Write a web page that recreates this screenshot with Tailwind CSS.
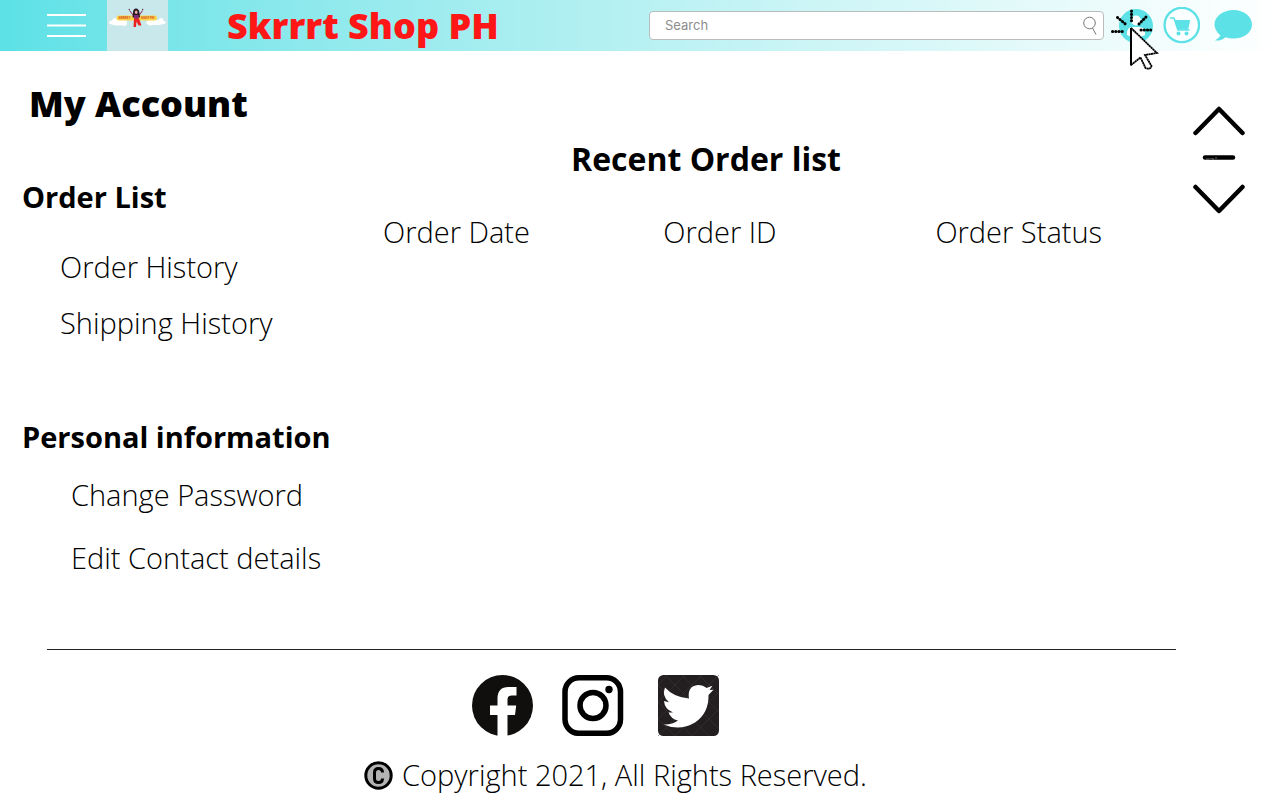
<!DOCTYPE html>
<html lang="en">
<head>
<meta charset="utf-8">
<meta name="viewport" content="width=device-width, initial-scale=1">
<title>Skrrrt Shop PH - My Account</title>
<script src="https://cdn.jsdelivr.net/npm/@tailwindcss/browser@4"></script>
</head>
<body class="bg-white font-['Open_Sans',sans-serif] text-black">
<header class="flex h-[51px] items-center bg-linear-to-r from-[#5ce1e6] to-white">
  <button type="button" aria-label="Menu" class="ml-[47px] shrink-0">
    <svg class="block" width="40" height="24" viewBox="0 0 40 24" stroke="#fff" stroke-width="2"><path d="M0 1h39M0 11.500h39M0 22h39"/></svg>
  </button>
  <a href="#" aria-label="Home" class="ml-5 shrink-0">
    <svg class="block" width="61" height="51" viewBox="0 0 61 51">
      <rect width="61" height="51" fill="#c8e8ec"/>
      <g fill="#fff"><ellipse cx="11" cy="22.500" rx="9" ry="3"/><circle cx="8" cy="20.500" r="2.500"/><ellipse cx="49" cy="22.500" rx="10" ry="2.500"/><circle cx="54" cy="20.500" r="2.500"/><circle cx="17" cy="23" r="3"/><circle cx="43" cy="22.500" r="3"/></g>
      <rect x="9.500" y="15.500" width="40.500" height="5" rx="2.500" fill="#fbd44c"/>
      <text x="11.500" y="19.200" font-size="3" font-weight="800" fill="#d9632a">SKRRRT</text>
      <text x="34" y="19.200" font-size="3" font-weight="800" fill="#d9632a">SHOP PH</text>
      <path d="M26.500 15.500l-4-5M32 15.500l3.500-5" stroke="#a04a78" stroke-width="1.200"/>
      <circle cx="22.300" cy="9.500" r=".8" fill="#6e4a58"/><circle cx="35.700" cy="9.500" r=".8" fill="#6e4a58"/>
      <path d="M26 13q0-4.500 3-4.500t3.500 4.500l.5 4.500h-7.500z" fill="#2c1824"/>
      <ellipse cx="29.200" cy="12.300" rx="1.300" ry="1.700" fill="#e9b3a0"/>
      <path d="M27 15h4.500v4H27z" fill="#7c2f7c"/>
      <path d="M27 18.500h5l2.500 7h-3l-2-4-.5 5.500h-2.500z" fill="#ec2323"/>
    </svg>
  </a>
  <p class="ml-[59px] shrink-0 text-4xl leading-[51px] font-extrabold whitespace-nowrap text-[#ff1616]">Skrrrt Shop PH</p>
  <form role="search" class="ml-auto flex h-[29px] w-[455px] items-center rounded-sm border border-[#b9bcbd] bg-white">
    <input type="search" aria-label="Search" placeholder="Search" class="min-w-0 flex-1 bg-transparent pl-[15px] font-['Inter',sans-serif] text-[13px] outline-none placeholder:text-[#8c8c8c]">
    <button type="submit" aria-label="Submit search" class="mr-[5px]">
      <svg class="block" width="15" height="20" viewBox="0 0 15 20" fill="none" stroke="#777" stroke-width="1"><circle cx="6.500" cy="7" r="5.800"/><path d="M9.500 12l3.500 6.500"/></svg>
    </button>
  </form>
  <div class="relative ml-[15px] shrink-0">
    <button type="button" aria-label="Account" class="block">
      <svg class="block" width="34" height="34" viewBox="0 0 34 34"><circle cx="17" cy="17" r="17" fill="#5ce1e6"/><circle cx="17" cy="11.500" r="5" fill="#fff"/><path d="M8 26v-2q0-6 6-6h6q6 0 6 6v2q-9 5-18 0z" fill="#fff"/></svg>
    </button>
    <svg class="pointer-events-none absolute -top-[1px] -left-[9px]" width="50" height="64" viewBox="1110 8 50 64" aria-hidden="true">
      <path d="M1131 28v37l9-7.500 5.500 11q4 3 5-2l-6-11 12.500-2.500z" fill="#fff"/>
      <path d="M1131.500 11v11M1117.500 17.500l8.500 7M1139 24l8-8M1112.500 31.500h11M1141 30h12" fill="none" stroke="#000" stroke-width="3" stroke-linecap="round" stroke-dasharray="0.200 3"/>
      <path d="M1131 28v37.500" stroke="#000" stroke-width="2" fill="none"/>
      <path d="M1131 28l26 25-12 2 6.500 11q-1 4-6 2l-5-10.500-9.500 7.500" fill="none" stroke="#000" stroke-width="1.800" stroke-dasharray="2.200 .3"/>
    </svg>
  </div>
  <a href="#" aria-label="Cart" class="ml-[10px] shrink-0">
    <svg class="block" width="37" height="37" viewBox="0 0 37 37"><circle cx="18.800" cy="18" r="17.200" fill="#fff" fill-opacity=".7" stroke="#5ce1e6" stroke-width="2.300"/><path d="M7.500 11h3.500l4 12h11" fill="none" stroke="#5ce1e6" stroke-width="1.600" stroke-linecap="round"/><path d="M11.500 13h15.700l-2 9.500H14.500z" fill="#5ce1e6"/><circle cx="15.500" cy="26.500" r="2" fill="#5ce1e6"/><circle cx="23.500" cy="26.500" r="2" fill="#5ce1e6"/></svg>
  </a>
  <a href="#" aria-label="Messages" class="mr-7 ml-[14px] shrink-0">
    <svg class="block" width="38" height="32" viewBox="0 0 38 32"><path d="M19.500 0C30 0 38 6.500 38 14.500S30 28.500 19.500 28.500q-4.500 0-8-1.300Q7.500 31 1 30.500 5 28 6.500 25.500.5 20.500.5 14.500C.5 6.500 9 0 19.500 0z" fill="#5ce1e6"/></svg>
  </a>
</header>

<main class="flex items-start pt-[33px] pr-[35px] pl-[22px]">
  <nav aria-label="Account" class="w-[361px] shrink-0 text-[29px] leading-10 font-light">
    <h1 class="ml-[7px] text-4xl leading-10 font-extrabold">My Account</h1>
    <h2 class="mt-[53px] font-bold">Order List</h2>
    <ul class="mt-[30px] ml-[38px] space-y-4">
      <li><a href="#">Order History</a></li>
      <li><a href="#">Shipping History</a></li>
    </ul>
    <h2 class="mt-[74px] font-bold">Personal information</h2>
    <ul class="mt-[18px] ml-[49px] space-y-[23px]">
      <li><a href="#">Change Password</a></li>
      <li><a href="#">Edit Contact details</a></li>
    </ul>
  </nav>
  <section class="mt-[55px] min-w-0 flex-1" aria-labelledby="recent">
    <h2 id="recent" class="pl-[188px] text-[32px] leading-10 font-bold">Recent Order list</h2>
    <table class="mt-[33px] w-full table-fixed text-left text-[29px] leading-10">
      <thead><tr>
        <th scope="col" class="w-[34.6%] font-light">Order Date</th>
        <th scope="col" class="w-[33.6%] font-light">Order ID</th>
        <th scope="col" class="font-light">Order Status</th>
      </tr></thead>
      <tbody></tbody>
    </table>
  </section>
  <div class="mt-[22px] flex w-[52px] shrink-0 flex-col items-center">
    <button type="button" aria-label="Scroll up"><svg class="block" width="52" height="30" viewBox="0 0 52 30" fill="none" stroke="#000" stroke-width="4.500" stroke-linecap="round" stroke-linejoin="round"><path d="M2.500 27L26 3l23.500 24"/></svg></button>
    <svg class="mt-4 mb-5 block" width="34" height="12" viewBox="0 0 34 12" aria-hidden="true"><path d="M3 5.500h28" stroke="#000" stroke-width="4.500" stroke-linecap="round"/><path d="M4 7h3m1-1v1m2-1v1h2m1-1h2" stroke="#999" stroke-width=".7"/></svg>
    <button type="button" aria-label="Scroll down"><svg class="block" width="52" height="30" viewBox="0 0 52 30" fill="none" stroke="#000" stroke-width="4.500" stroke-linecap="round" stroke-linejoin="round"><path d="M2.500 3L26 27 49.500 3"/></svg></button>
  </div>
</main>

<footer class="mt-[71px] mr-[104px] ml-[47px] border-t border-[#222] pt-[25px]">
  <div class="flex justify-center pr-8">
    <a href="#" aria-label="Facebook"><svg class="block" width="61" height="61" viewBox="0 0 61 61"><circle cx="30.500" cy="30.500" r="30.500" fill="#100f0d"/><path d="M25.500 61V40H18v-9.500h7.500v-7q0-11.500 11-11.500h8v8.500h-5q-4 0-4 4v6h8.700L43 40h-7.500v21z" fill="#fff"/></svg></a>
    <a href="#" aria-label="Instagram" class="ml-[29px]"><svg class="block" width="62" height="61" viewBox="0 0 62 61" fill="none" stroke="#000" stroke-width="5.500"><rect x="3" y="2.800" width="55.500" height="55.500" rx="14"/><circle cx="31" cy="30.500" r="13"/><circle cx="47" cy="14.500" r="3.700" fill="#000" stroke="none"/></svg></a>
    <a href="#" aria-label="Twitter" class="ml-[34px]"><svg class="block" width="61" height="61" viewBox="0 0 61 61"><rect width="61" height="61" rx="5.500" fill="#231f20"/><path d="M0 10L51 61M0 27l34 34M0 44l17 17M7 0l54 54M24 0l37 37M41 0l20 20M10 0L0 10M27 0L0 27M44 0L0 44M61 0L0 61M61 17L17 61M61 34L34 61" stroke="#3c3a3c" stroke-width=".5"/><path d="M5.500 49.500Q14 50 20 45.500q-7-1.500-9.500-8h4.500q-8.500-3.500-9-11.500l5 1.200Q3.500 21 7 12.500 16 22.500 31 23.500 29 11 40 10q5 0 8.500 3l6-2.200-3 4.200 4-.3-5 5.300Q51 38 37 47.500q-15 9-31.500 2z" fill="#fff"/></svg></a>
  </div>
  <p class="mt-[19px] flex items-center justify-center pl-2 text-[29px] leading-10 font-light">
    <svg class="mr-[9px] block shrink-0" width="29" height="29" viewBox="0 0 29 29" role="img" aria-label="Copyright"><circle cx="14.500" cy="14.500" r="12.700" fill="#b3b3b3" stroke="#000" stroke-width="3"/><path d="M18.500 11.500q0-4-4-4t-4 4v6q0 4 4 4t4-4" fill="none" stroke="#000" stroke-width="3"/></svg>
    Copyright 2021, All Rights Reserved.
  </p>
</footer>
</body>
</html>
